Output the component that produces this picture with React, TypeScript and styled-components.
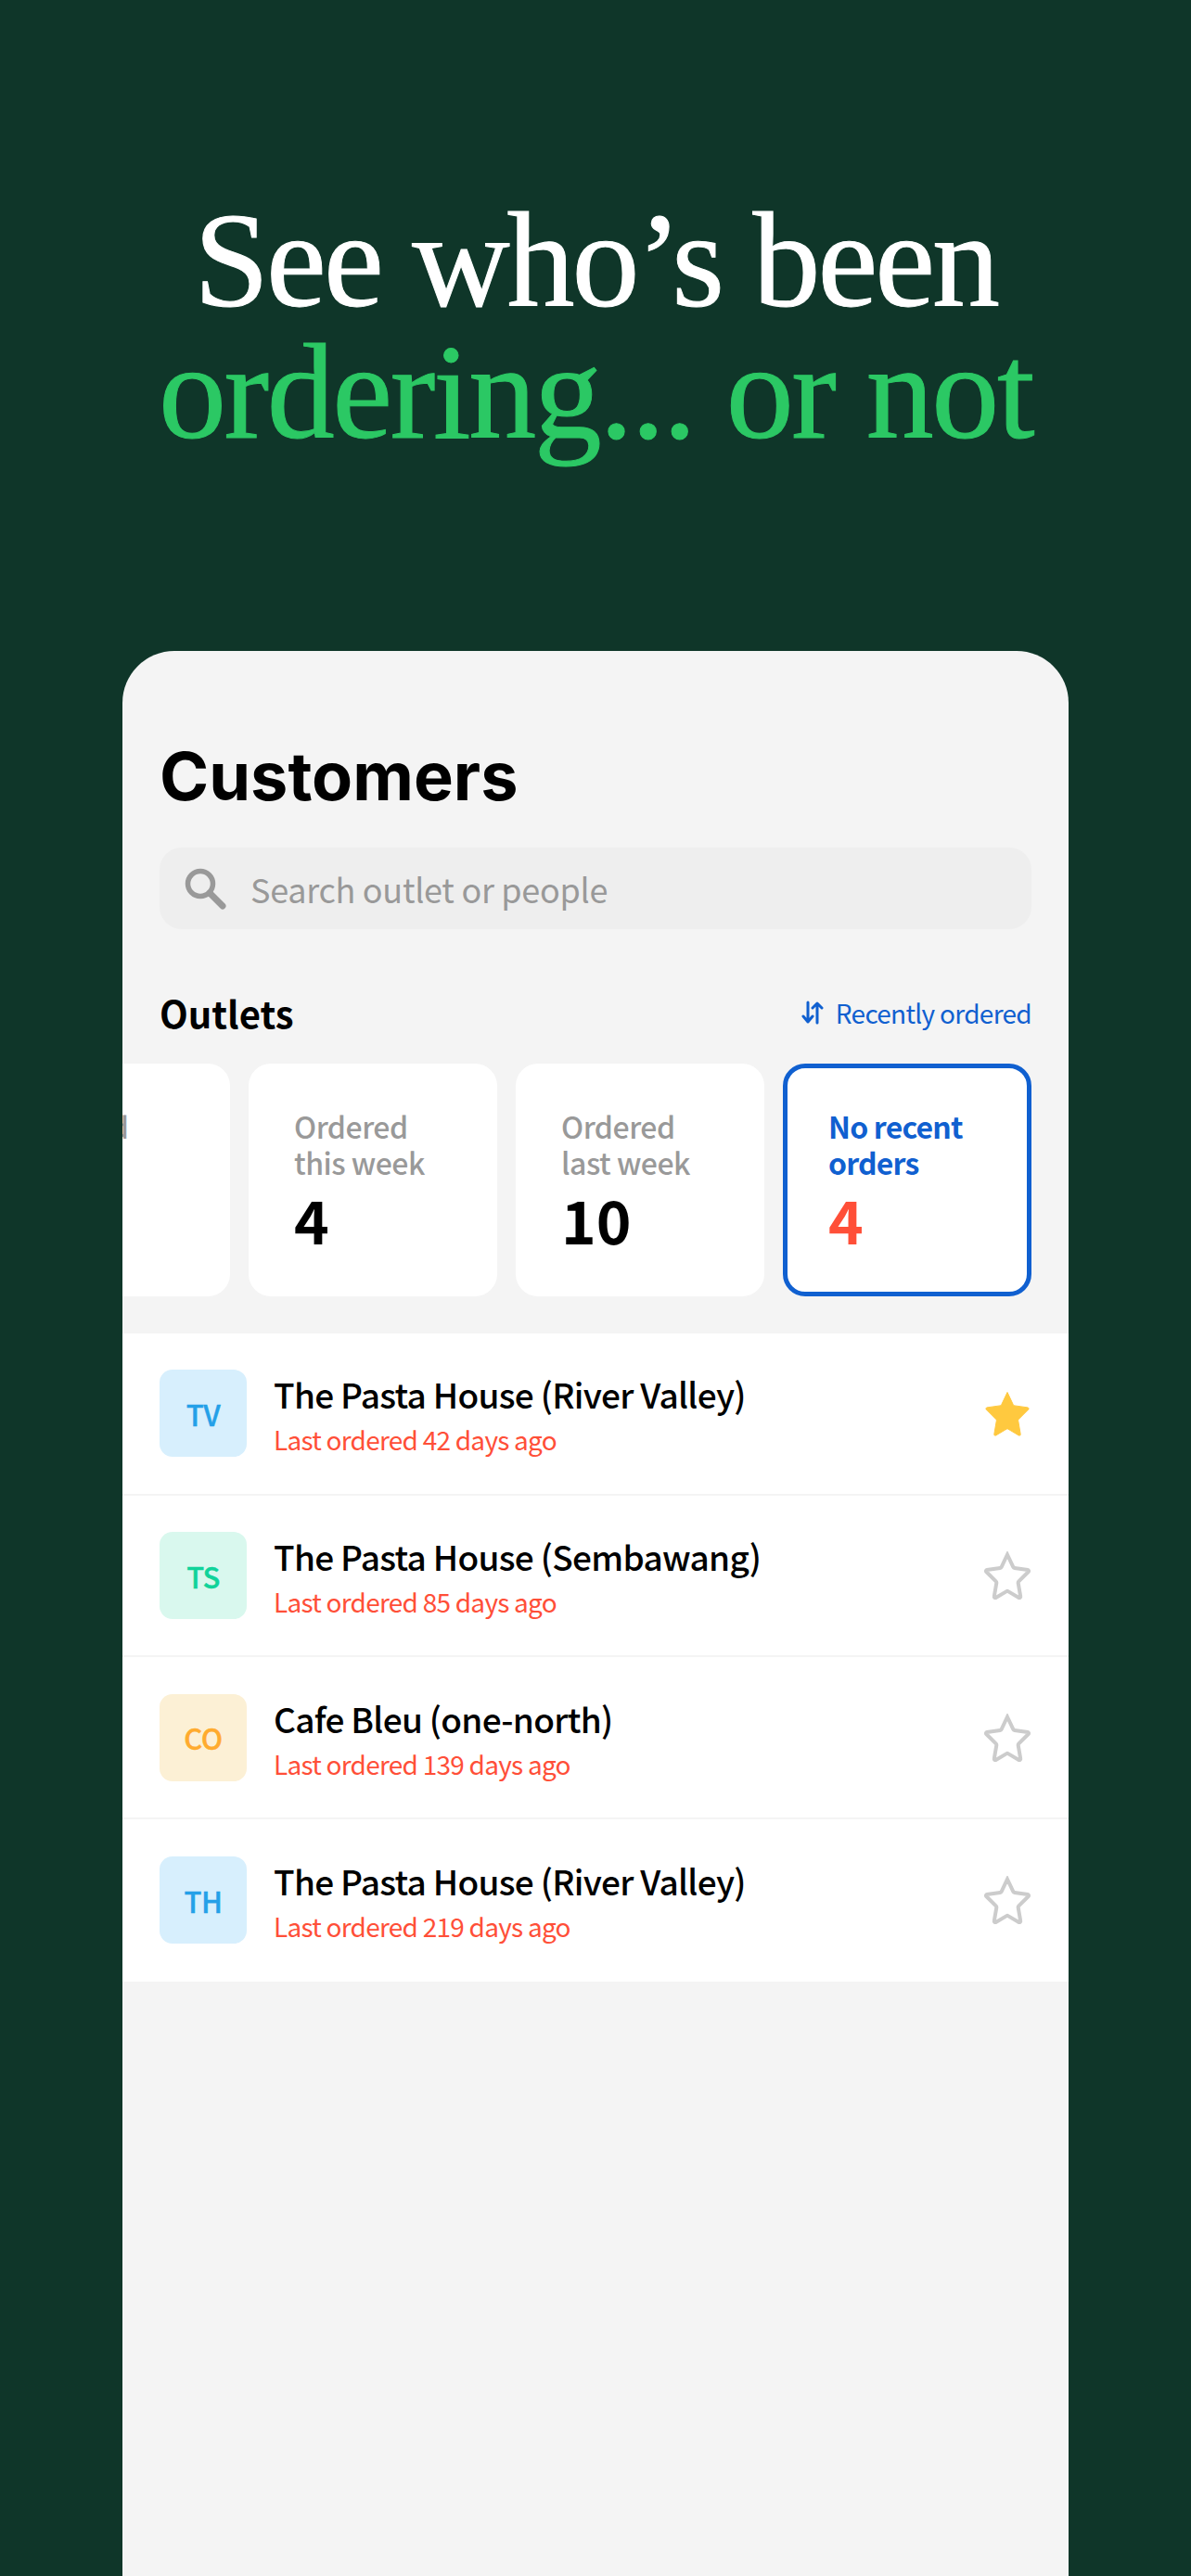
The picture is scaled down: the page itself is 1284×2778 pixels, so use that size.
import styled, { createGlobalStyle } from "styled-components";

const sans = `"Noto Sans CJK SC", "Noto Sans", sans-serif`;

interface TOutlet {
    initials: string,
    tint: string,
    ink: string,
    name: string,
    days: number,
    starred?: boolean
}

const outlets: TOutlet[] = [
    { initials: "TV", tint: "#d7effd", ink: "#24a0e8", name: "The Pasta House (River Valley)", days: 42, starred: true },
    { initials: "TS", tint: "#d9f8ee", ink: "#10d39a", name: "The Pasta House (Sembawang)", days: 85 },
    { initials: "CO", tint: "#fcf0d5", ink: "#ffab2e", name: "Cafe Bleu (one-north)", days: 139 },
    { initials: "TH", tint: "#d7effd", ink: "#24a0e8", name: "The Pasta House (River Valley)", days: 219 },
];

const STAR = "M25 3.5l6.3 13.3c.3.6.8 1 1.5 1.1l14.2 2c1 .2 1.4 1.4.7 2.1L37.300 32.400c-.5.5-.7 1.100-.6 1.800l2.500 14.500c.2 1-.9 1.800-1.800 1.300L25.800 43.100c-.5-.3-1.100-.3-1.600 0L12.600 50c-.9.500-2 -.3-1.800-1.300l2.500-14.500c.1-.7-.1-1.300-.6-1.800L2.300 22c-.7-.7-.3-1.900.7-2.100l14.200-2c.7-.1 1.200-.5 1.500-1.100z";

export default function App() {
    return (
        <Page>
            <GlobalStyle />
            <Headline>
                See who’s been
                <Accent>ordering... or not</Accent>
            </Headline>
            <Phone>
                <Title>Customers</Title>
                <SearchBar>
                    <svg width="46" height="46" viewBox="0 0 46 46" fill="none" stroke="#999999" strokeWidth="5.5" strokeLinecap="round">
                        <circle cx="18" cy="18" r="13.500" />
                        <path d="M28 28l14 14" strokeWidth="7" />
                    </svg>
                    <SearchText>Search outlet or people</SearchText>
                </SearchBar>
                <SectionHead>
                    <SectionTitle>Outlets</SectionTitle>
                    <SortLink>
                        <svg width="24" height="26" viewBox="0 0 24 26" fill="none" stroke="#1060d0" strokeWidth="3" strokeLinecap="round" strokeLinejoin="round">
                            <path d="M7 2v21M2 17l5 6 5-6" />
                            <path d="M17 24V3M12 8l5-5 5 5" />
                        </svg>
                        Recently ordered
                    </SortLink>
                </SectionHead>
                <Tiles>
                    <Tile><TileLabel>Starred</TileLabel><TileCount>1</TileCount></Tile>
                    <Tile><TileLabel>Ordered this week</TileLabel><TileCount>4</TileCount></Tile>
                    <Tile><TileLabel>Ordered last week</TileLabel><TileCount>10</TileCount></Tile>
                    <Tile $active><TileLabel $active>No recent orders</TileLabel><TileCount $alert>4</TileCount></Tile>
                </Tiles>
                <List>
                    {outlets.map((outlet) => (
                        <Row key={outlet.initials}>
                            <Avatar $tint={outlet.tint} $ink={outlet.ink}>{outlet.initials}</Avatar>
                            <RowText>
                                <RowName>{outlet.name}</RowName>
                                <RowMeta>Last ordered {outlet.days} days ago</RowMeta>
                            </RowText>
                            <svg width="52" height="52" viewBox="0 0 50 52">
                                <path
                                    d={STAR}
                                    fill={outlet.starred ? "#ffc93f" : "none"}
                                    stroke={outlet.starred ? "#ffc93f" : "#cccccc"}
                                    strokeWidth={outlet.starred ? 1 : 4}
                                />
                            </svg>
                        </Row>
                    ))}
                </List>
            </Phone>
        </Page>
    );
}

const GlobalStyle = createGlobalStyle`
    html, body {
        margin: 0;
        padding: 0;
        background: #0f3629;
    }
`

const Page = styled.div`
    width: 1284px;
    height: 2778px;
    overflow: hidden;
    background: #0f3629;
    display: flex;
    flex-direction: column;
    align-items: center;
`

const Headline = styled.h1`
    flex: none;
    width: 100%;
    margin: 0;
    padding-top: 210px;
    height: 702px;
    box-sizing: border-box;
    font-family: "Liberation Serif", serif;
    font-weight: 400;
    font-size: 146px;
    line-height: 142px;
    letter-spacing: -3px;
    -webkit-text-stroke: 1px currentColor;
    text-align: center;
    color: #ffffff;
`

const Accent = styled.span`
    display: block;
    letter-spacing: -2.4px;
    color: #2bc864;
`

const Phone = styled.div`
    width: 1020px;
    flex: 1;
    background: #f4f4f4;
    border-radius: 56px 56px 0 0;
    overflow: hidden;
    padding-top: 90px;
    box-sizing: border-box;
`

const Title = styled.h2`
    margin: 0 40px;
    font-family: Inter, sans-serif;
    font-weight: 700;
    font-size: 72px;
    line-height: 90px;
    color: #000000;
`

const SearchBar = styled.div`
    margin: 32px 40px 0;
    height: 88px;
    padding: 0 24px 0 26px;
    border-radius: 24px;
    background: #eeeeee;
    display: flex;
    align-items: center;
    gap: 26px;
`

const SearchText = styled.span`
    font-family: ${sans};
    font-size: 36px;
    letter-spacing: -0.3px;
    color: #999999;
`

const SectionHead = styled.div`
    margin: 60px 40px 0;
    display: flex;
    justify-content: space-between;
    align-items: center;
    height: 60px;
`

const SectionTitle = styled.span`
    font-family: ${sans};
    font-weight: 700;
    font-size: 40px;
    color: #000000;
`

const SortLink = styled.span`
    display: flex;
    align-items: center;
    gap: 13px;
    font-family: ${sans};
    font-size: 28px;
    letter-spacing: -0.7px;
    color: #1060d0;
`

const Tiles = styled.div`
    margin-top: 25px;
    padding-right: 40px;
    display: flex;
    justify-content: flex-end;
    gap: 20px;
`

const Tile = styled.div<{$active?: boolean}>`
    flex: 0 0 268px;
    height: 251px;
    box-sizing: border-box;
    padding: ${({$active})=>$active ? "43px 44px" : "48px 49px"};
    margin: 0;
    border-radius: 24px;
    background: #ffffff;
    border: ${({$active})=>$active ? "5px solid #1060d0" : "none"};
`

const TileLabel = styled.div<{$active?: boolean}>`
    font-family: ${sans};
    font-size: 32px;
    letter-spacing: ${({$active})=>$active ? "-0.8px" : "-0.5px"};
    font-weight: ${({$active})=>$active ? 700 : 500};
    line-height: 39px;
    height: 78px;
    color: ${({$active})=>$active ? "#1060d0" : "#999999"};
`

const TileCount = styled.div<{$alert?: boolean}>`
    margin-top: 2px;
    font-family: ${sans};
    font-size: 64px;
    font-weight: 700;
    line-height: 78px;
    color: ${({$alert})=>$alert ? "#ff4f38" : "#000000"};
`

const List = styled.div`
    margin-top: 40px;
    background: #ffffff;
`

const Row = styled.div`
    height: 174.700px;
    box-sizing: border-box;
    padding: 0 40px;
    display: flex;
    align-items: center;
    border-bottom: 2px solid #f4f4f4;

    &:last-child {
        border-bottom: none;
    }
`

const Avatar = styled.div<{$tint: string, $ink: string}>`
    flex: 0 0 94px;
    height: 94px;
    border-radius: 14px;
    background: ${({$tint})=>$tint};
    color: ${({$ink})=>$ink};
    display: flex;
    align-items: center;
    justify-content: center;
    font-family: ${sans};
    font-weight: 500;
    font-size: 31px;
    letter-spacing: -0.5px;
    -webkit-text-stroke: 0.4px currentColor;
`

const RowText = styled.div`
    flex: 1;
    margin-left: 29px;
    padding-top: 4px;
`

const RowName = styled.div`
    font-family: ${sans};
    font-weight: 500;
    font-size: 37px;
    letter-spacing: -0.7px;
    line-height: 50px;
    color: #000000;
`

const RowMeta = styled.div`
    margin-top: 2px;
    font-family: ${sans};
    font-size: 28px;
    letter-spacing: -0.75px;
    line-height: 44px;
    color: #ff4f38;
`
